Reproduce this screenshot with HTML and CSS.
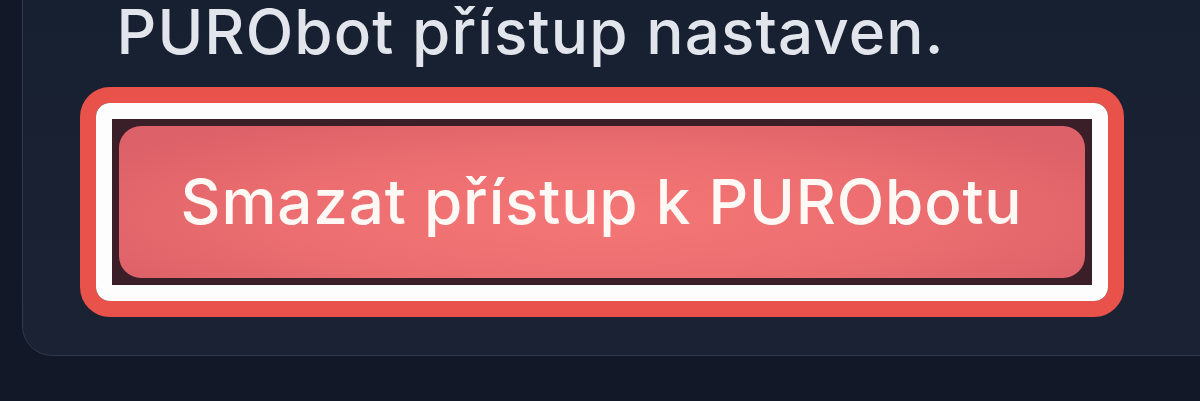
FILE: index.html
```html
<!DOCTYPE html>
<html lang="cs">
<head>
<meta charset="utf-8">
<title>PURObot</title>
<link rel="stylesheet" href="styles.css">
</head>
<body>
  <section class="card">
    <p class="status">PURObot přístup nastaven.</p>
    <div class="focus-ring">
      <div class="focus-inner">
        <button class="danger-btn" type="button">Smazat přístup k PURObotu</button>
      </div>
    </div>
  </section>
</body>
</html>
```
FILE: styles.css
```css
html, body {
  margin: 0;
  padding: 0;
}
body {
  width: 1200px;
  height: 401px;
  overflow: hidden;
  background: #121827;
  font-family: Inter, "Noto Sans", sans-serif;
}
.card {
  box-sizing: border-box;
  width: 1260px;
  margin: -60px 0 0 22px;
  padding: 58.5px 0 38px 56.5px;
  border: 1.5px solid #2d3a4c;
  border-radius: 30px;
  background: linear-gradient(180deg, #172030 0%, #1a2233 100%);
}
.status {
  margin: 0 0 23px 0;
  padding-left: 37px;
  font-size: 62px;
  line-height: 64px;
  font-weight: 500;
  letter-spacing: 1.1px;
  color: #e2e6ec;
  white-space: nowrap;
}
.focus-ring {
  display: inline-block;
  border: 16px solid #e8524a;
  border-radius: 30px;
}
.focus-inner {
  border: 16px solid #fdfdfd;
  border-radius: 14px;
  padding: 7px;
  background: #3a1f29;
}
.danger-btn {
  display: block;
  width: 966px;
  height: 152px;
  border: 0;
  border-radius: 22px;
  padding: 0;
  background: radial-gradient(ellipse 60% 75% at 50% 60%, #f47676 0%, #ec6e70 55%, #dc6168 100%);
  color: #fff9f6;
  font-family: Inter, "Noto Sans", sans-serif;
  font-size: 62px;
  font-weight: 500;
  letter-spacing: 0.8px;
  white-space: nowrap;
  cursor: pointer;
}
```
